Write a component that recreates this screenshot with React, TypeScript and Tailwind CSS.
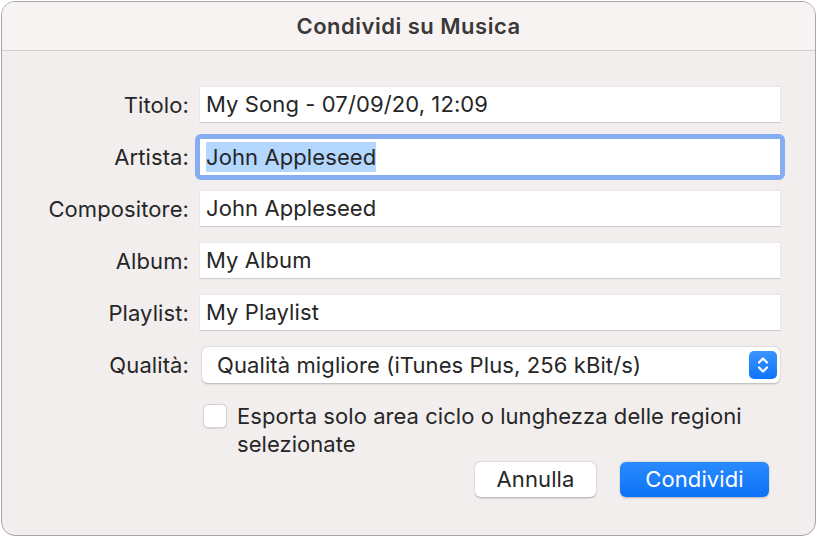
import React from 'react';

const font = { fontFamily: 'Inter, "Noto Sans", sans-serif' };

function Field({ label, value, focused }: { label: string; value: string; focused?: boolean }) {
  return (
    <>
      <label className="text-right text-[22px] leading-[36px] text-[#262626] tracking-[0.1px]">{label}</label>
      {focused ? (
        <div className="-m-[5px] rounded-[6px] border-[5px] border-[#86adf1]">
          <div className="h-[36px] bg-white flex items-center pl-[6px] text-[22px] text-[#262626] tracking-[0.1px]">
            <span className="bg-[#b3d7ff] leading-[30px]">{value}</span>
          </div>
        </div>
      ) : (
        <div className="h-[36px] bg-white border-b border-[#cfcccc] shadow-[0_0_0_1px_#ebe7e7] flex items-center pl-[6px] text-[22px] text-[#262626] tracking-[0.1px]">
          {value}
        </div>
      )}
    </>
  );
}

export default function App() {
  return (
    <div className="w-[817px] h-[537px] p-px bg-white" style={font}>
      <div className="h-full rounded-[14px] border border-[#a6a4a4] bg-[#f3eeee] overflow-hidden flex flex-col">
        <div className="h-[49px] shrink-0 bg-[#f8f3f3] border-b border-[#d4d0d0] flex items-center justify-center">
          <h1 className="text-[22px] font-semibold text-[#3b3838] tracking-[0.5px]">Condividi su Musica</h1>
        </div>

        <div className="pt-[36px] pr-[35px]">
          <div className="grid grid-cols-[187px_1fr] gap-x-[11px] gap-y-[16px]">
            <Field label="Titolo:" value="My Song - 07/09/20, 12:09" />
            <Field label="Artista:" value="John Appleseed" focused />
            <Field label="Compositore:" value="John Appleseed" />
            <Field label="Album:" value="My Album" />
            <Field label="Playlist:" value="My Playlist" />

            <label className="text-right text-[22px] leading-[36px] text-[#262626] tracking-[0.1px]">Qualità:</label>
            <div className="ml-[2px] h-[36px] bg-white rounded-[6px] shadow-[0_0.5px_2px_rgba(0,0,0,0.25)] flex items-center pl-[15px] pr-[3px] text-[22px] text-[#262626] tracking-[0.1px]">
              <span className="flex-1">Qualità migliore (iTunes Plus, 256 kBit/s)</span>
              <div className="w-[28px] h-[28px] rounded-[5px] bg-gradient-to-b from-[#3a94ff] to-[#0a74fa] flex items-center justify-center">
                <svg width="14" height="20" viewBox="0 0 14 20" fill="none" stroke="white" strokeWidth="2.2" strokeLinecap="round" strokeLinejoin="round">
                  <path d="M3 7.5 L7 3.5 L11 7.5" />
                  <path d="M3 12.5 L7 16.5 L11 12.5" />
                </svg>
              </div>
            </div>
          </div>

          <div className="ml-[201px] mt-[19px] flex gap-[10px]">
            <div className="mt-[2px] w-[24px] h-[24px] shrink-0 rounded-[5px] bg-white border border-[#d6d3d3] shadow-[0_0.5px_1px_rgba(0,0,0,0.1)]" />
            <p className="text-[22px] leading-[28px] text-[#262626] tracking-[0.05px]">
              Esporta solo area ciclo o lunghezza delle regioni
              <br />
              selezionate
            </p>
          </div>

          <div className="mt-[4px] flex justify-end gap-[24px] pr-[11px]">
            <button className="w-[121px] h-[35px] rounded-[6px] bg-white shadow-[0_0.5px_2px_rgba(0,0,0,0.3)] text-[22px] text-[#262626] tracking-[0.1px]">
              Annulla
            </button>
            <button className="w-[149px] h-[35px] rounded-[6px] bg-gradient-to-b from-[#2a8bff] to-[#0a72f7] shadow-[0_0.5px_2px_rgba(0,0,0,0.25)] text-[22px] text-white tracking-[0.1px]">
              Condividi
            </button>
          </div>
        </div>
      </div>
    </div>
  );
}
